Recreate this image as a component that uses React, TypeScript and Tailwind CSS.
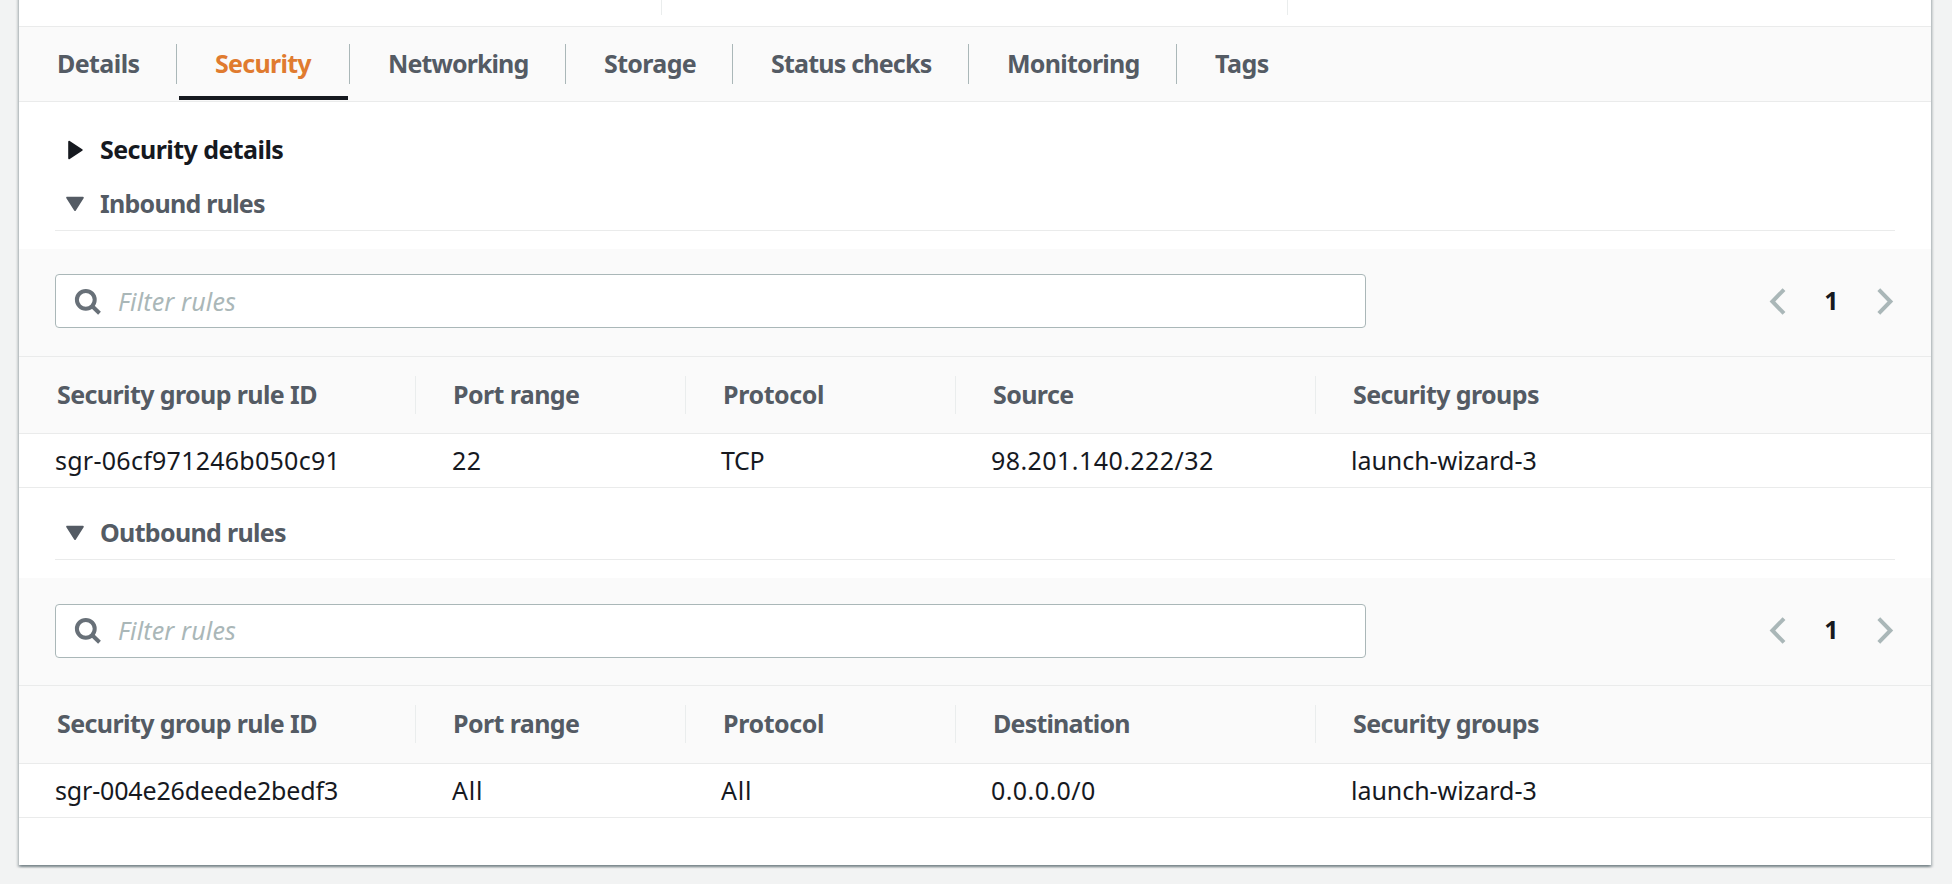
import clsx from "clsx";

type Label = { text: string; tracking: string };

const tabs: (Label & { width: string; active?: boolean })[] = [
  { text: "Details", tracking: "tracking-[-0.58px]", width: "w-[158px]" },
  { text: "Security", tracking: "tracking-[-0.72px]", width: "w-[173px]", active: true },
  { text: "Networking", tracking: "tracking-[-0.9px]", width: "w-[216px]" },
  { text: "Storage", tracking: "tracking-[-0.65px]", width: "w-[167px]" },
  { text: "Status checks", tracking: "tracking-[-0.8px]", width: "w-[236px]" },
  { text: "Monitoring", tracking: "tracking-[-0.75px]", width: "w-[208px]" },
  { text: "Tags", tracking: "tracking-[-0.5px]", width: "w-[130px]" },
];

const inboundHeaders: Label[] = [
  { text: "Security group rule ID", tracking: "tracking-[-0.6px]" },
  { text: "Port range", tracking: "tracking-[-0.6px]" },
  { text: "Protocol", tracking: "tracking-[-0.4px]" },
  { text: "Source", tracking: "tracking-[-0.6px]" },
  { text: "Security groups", tracking: "tracking-[-0.6px]" },
];

const outboundHeaders: Label[] = [
  ...inboundHeaders.slice(0, 3),
  { text: "Destination", tracking: "tracking-[-0.8px]" },
  inboundHeaders[4],
];

const inboundRow: Label[] = [
  { text: "sgr-06cf971246b050c91", tracking: "tracking-[0.26px]" },
  { text: "22", tracking: "tracking-[0.5px]" },
  { text: "TCP", tracking: "tracking-[-0.35px]" },
  { text: "98.201.140.222/32", tracking: "tracking-[0.44px]" },
  { text: "launch-wizard-3", tracking: "tracking-[-0.04px]" },
];

const outboundRow: Label[] = [
  { text: "sgr-004e26deede2bedf3", tracking: "tracking-[-0.16px]" },
  { text: "All", tracking: "tracking-[0.8px]" },
  { text: "All", tracking: "tracking-[0.8px]" },
  { text: "0.0.0.0/0", tracking: "tracking-[0.42px]" },
  { text: "launch-wizard-3", tracking: "tracking-[-0.04px]" },
];

const columns = "grid grid-cols-[397px_270px_270px_360px_1fr]";
const headerPadding = ["pl-[38px]", "pl-[37px]", "pl-[37px]", "pl-[37px]", "pl-[37px]"];
const cellPadding = ["pl-[36px]", "pl-[36px]", "pl-[35px]", "pl-[35px]", "pl-[35px]"];

function CaretRight() {
  return (
    <svg className="size-5 overflow-visible" viewBox="0 0 20 20" fill="currentColor" stroke="currentColor" strokeWidth="2" strokeLinejoin="round">
      <path d="M4.2 2.8 16.7 11 4.2 19.2Z" />
    </svg>
  );
}

function CaretDown() {
  return (
    <svg className="size-5" viewBox="0 0 20 20" fill="currentColor" stroke="currentColor" strokeWidth="2" strokeLinejoin="round">
      <path d="M2.2 4.7H17.8L10 17Z" />
    </svg>
  );
}

function SearchIcon() {
  return (
    <svg className="h-7 w-[30px] text-[#687078]" viewBox="0 0 30 28" fill="none" stroke="currentColor" strokeWidth="4">
      <circle cx="12.8" cy="12.8" r="8.9" />
      <path d="m19 19 7.5 7.2" />
    </svg>
  );
}

function Chevron({ direction }: { direction: "left" | "right" }) {
  return (
    <svg className="h-[30px] w-[18px] text-[#aab7b8]" viewBox="0 0 18 30" fill="none" stroke="currentColor" strokeWidth="4">
      <path d={direction === "left" ? "M15 3.6 3.4 15.5 15 27.4" : "M2.8 3.6 14.4 15.5 2.8 27.4"} />
    </svg>
  );
}

function SectionTitle({ text, tracking, collapsed }: Label & { collapsed?: boolean }) {
  return (
    <div
      className={clsx(
        "mx-9 flex h-[54px] items-center gap-[15px] pl-[10px] font-bold",
        tracking,
        collapsed ? "text-[#16191f]" : "box-content border-b border-[#eaebeb] text-[#545b64]",
      )}
    >
      {collapsed ? <CaretRight /> : <CaretDown />}
      <h3>{text}</h3>
    </div>
  );
}

function Toolbar({ padding, innerPadding }: { padding: string; innerPadding?: string }) {
  return (
    <div className={clsx("mt-[18px] flex items-center justify-between border-b border-[#eaebeb] bg-[#fafafa] pr-[37px] pl-9", padding)}>
      <div className={clsx("flex h-[54px] w-[1311px] items-center gap-[15px] rounded-[4px] border border-[#aab7b8] bg-white pl-[17px]", innerPadding)}>
        <SearchIcon />
        <span className="tracking-[0.15px] text-[#aab7b8] italic">Filter rules</span>
      </div>
      <div className={clsx("flex items-center", innerPadding)}>
        <Chevron direction="left" />
        <span className="w-[89px] pb-[2px] text-center font-bold text-[#16191f]">1</span>
        <Chevron direction="right" />
      </div>
    </div>
  );
}

function RulesTable({ headers, row, headerHeight }: { headers: Label[]; row: Label[]; headerHeight: string }) {
  return (
    <div>
      <div className={clsx(columns, "items-start border-b border-[#eaebeb] bg-[#fafafa] pt-[19px] font-bold text-[#545b64]", headerHeight)}>
        {headers.map((h, i) => (
          <div key={h.text} className={clsx("h-[38px] leading-[37px]", h.tracking, headerPadding[i], i < 4 && "border-r border-[#eaeded]")}>
            {h.text}
          </div>
        ))}
      </div>
      <div className={clsx(columns, "h-[54px] border-b border-[#eaebeb] leading-[53px] text-[#16191f]")}>
        {row.map((c, i) => (
          <div key={i} className={clsx(c.tracking, cellPadding[i])}>
            {c.text}
          </div>
        ))}
      </div>
    </div>
  );
}

export default function App() {
  return (
    <div className="h-[884px] overflow-hidden bg-[#f2f3f3] pr-[21px] pl-[19px] font-['Noto_Sans',sans-serif] text-[25px] leading-[34px] whitespace-nowrap">
      <main className="-mt-2 h-[873px] bg-white pt-2 shadow-[0_2px_2px_0_rgba(0,28,36,0.3),2px_2px_2px_0_rgba(0,28,36,0.15),-2px_2px_2px_0_rgba(0,28,36,0.15)]">
        <div className="flex h-[26px] items-start">
          <div className="h-[15px] w-[643px] border-r border-[#eaeded]" />
          <div className="h-[15px] w-[626px] border-r border-[#eaeded]" />
        </div>
        <nav className="flex h-[76px] items-center border-y border-[#eaebeb] bg-[#fafafa] font-bold">
          {tabs.map((tab, i) => (
            <div
              key={tab.text}
              className={clsx(
                "relative h-10 pl-[38px] leading-[39px]",
                tab.width,
                tab.tracking,
                i < tabs.length - 1 && "border-r border-[#aab7b8]",
                tab.active ? "text-[#e07b2f]" : "text-[#545b64]",
              )}
            >
              {tab.text}
              {tab.active && <span className="absolute right-px -bottom-4 left-[2px] h-1 bg-[#16191f]" />}
            </div>
          ))}
        </nav>
        <section className="pt-5">
          <SectionTitle text="Security details" tracking="tracking-[-0.55px]" collapsed />
          <SectionTitle text="Inbound rules" tracking="tracking-[-0.75px]" />
          <Toolbar padding="pt-[25px] pb-7" />
          <RulesTable headers={inboundHeaders} row={inboundRow} headerHeight="h-[77px]" />
        </section>
        <section className="pt-[17px]">
          <SectionTitle text="Outbound rules" tracking="tracking-[-0.68px]" />
          <Toolbar padding="pt-[26px] pb-[27px]" innerPadding="pb-[2px]" />
          <RulesTable headers={outboundHeaders} row={outboundRow} headerHeight="h-[78px]" />
        </section>
      </main>
    </div>
  );
}
